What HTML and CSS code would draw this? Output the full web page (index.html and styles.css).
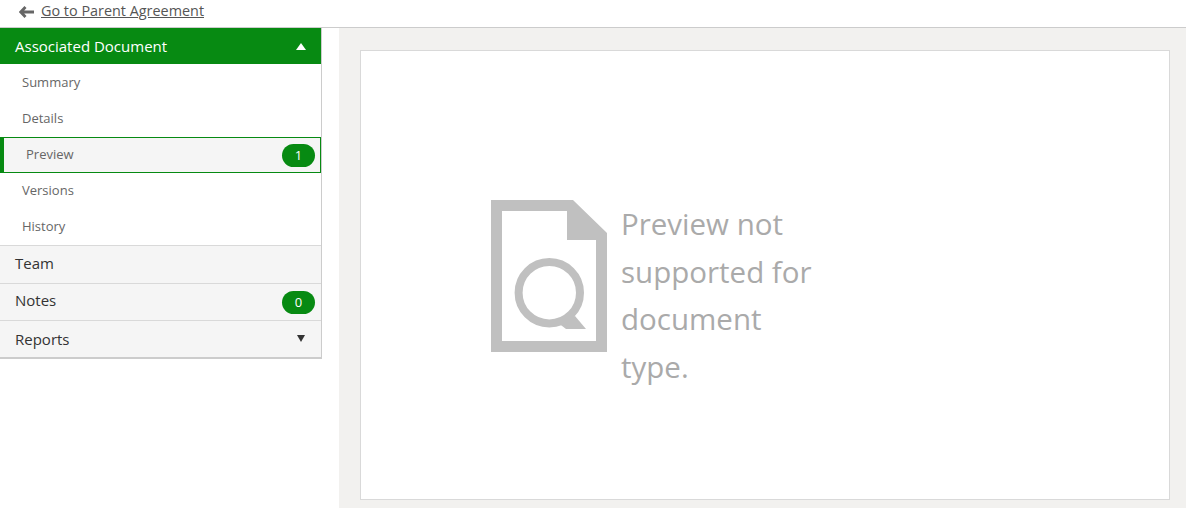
FILE: index.html
```html
<!DOCTYPE html>
<html lang="en">
<head>
    <meta charset="UTF-8">
    <title>Preview</title>
    <link rel="stylesheet" href="styles.css">
</head>
<body>
    <div class="top-bar">
        <svg class="back-icon" width="15" height="12" viewBox="0 0 15 12">
            <path d="M6.5 1 1.8 6 6.5 11M2.5 6H15" fill="none" stroke="#666" stroke-width="2.8"/>
        </svg>
        <a class="back-link" href="#">Go to Parent Agreement</a>
    </div>
    <div class="layout">
        <div class="sidebar">
            <div class="section-head active">
                <span>Associated Document</span>
                <span class="arrow up"></span>
            </div>
            <div class="sub-item">Summary</div>
            <div class="sub-item">Details</div>
            <div class="sub-item selected">
                <span class="sub-label">Preview</span>
                <span class="badge">1</span>
            </div>
            <div class="sub-item">Versions</div>
            <div class="sub-item">History</div>
            <div class="section-head team">
                <span class="head-label">Team</span>
            </div>
            <div class="section-head notes">
                <span class="head-label">Notes</span>
                <span class="badge">0</span>
            </div>
            <div class="section-head reports">
                <span>Reports</span>
                <span class="arrow down"></span>
            </div>
        </div>
        <div class="main">
            <div class="card">
                <div class="no-preview">
                    <svg class="doc-icon" width="116" height="152" viewBox="0 0 116 152">
                        <path fill-rule="evenodd" fill="#c0c0c0" d="M0 0H82L116 33V152H0ZM11 11V141H105V40H76V11Z"/>
                        <circle cx="58.3" cy="92.7" r="30.7" fill="none" stroke="#c0c0c0" stroke-width="8"/>
                        <path fill="#c0c0c0" d="M84 116 95 129H75L66 122Z"/>
                    </svg>
                    <p class="no-preview-text">Preview not supported for document type.</p>
                </div>
            </div>
        </div>
    </div>
</body>
</html>
```

FILE: styles.css
```css
html, body {
    height: 100%;
}
body {
    margin: 0;
    font-family: "Open Sans", sans-serif;
    color: #333;
    background-color: #fff;
    display: flex;
    flex-direction: column;
    overflow: hidden;
}
.top-bar {
    height: 27px;
    flex: none;
    display: flex;
    align-items: center;
    padding-left: 19px;
    padding-bottom: 7px;
    box-sizing: border-box;
}
.back-icon {
    margin-top: 3px;
    margin-right: 7px;
}
.back-link {
    font-size: 14.4px;
    color: #555;
}
.layout {
    flex: 1;
    display: flex;
    border-top: 1px solid #ccc;
}
.sidebar {
    width: 322px;
    flex: none;
    align-self: flex-start;
    box-sizing: border-box;
    border-right: 1px solid #ccc;
    border-bottom: 2px solid #ccc;
}
.section-head {
    display: flex;
    justify-content: space-between;
    align-items: center;
    padding: 0 6px 0 15px;
    font-size: 15px;
    background-color: #f5f5f5;
    border-top: 1px solid #d9d9d9;
    box-sizing: border-box;
}
.section-head.active {
    height: 36px;
    color: #fff;
    background-color: #078a12;
    border-top: none;
}
.section-head.team {
    height: 38px;
}
.section-head.notes {
    height: 37px;
}
.section-head.reports {
    height: 37px;
    padding-bottom: 1px;
}
.head-label {
    padding-bottom: 3px;
}
.notes .head-label {
    padding-bottom: 5px;
}
.sub-item {
    height: 36px;
    display: flex;
    justify-content: space-between;
    align-items: center;
    padding: 0 6px 0 22px;
    font-size: 13px;
    color: #666;
    box-sizing: border-box;
}
.sub-item.selected {
    margin-top: 1px;
    padding-right: 5px;
    background-color: #f5f5f5;
    border: 1px solid #078a12;
    border-left-width: 4px;
}
.sub-label {
    padding-bottom: 2px;
}
.selected ~ .sub-item {
    padding-bottom: 2px;
}
.badge {
    width: 33px;
    height: 23px;
    border-radius: 12px;
    background-color: #078a12;
    color: #fff;
    font-size: 13px;
    display: flex;
    align-items: center;
    justify-content: center;
}
.arrow {
    width: 0;
    height: 0;
    border-left: 5px solid transparent;
    border-right: 5px solid transparent;
}
.arrow.up {
    margin-right: 9px;
    border-bottom: 7px solid #fff;
}
.arrow.down {
    margin-right: 10px;
    border-left-width: 4.5px;
    border-right-width: 4.5px;
    border-top: 7px solid #333;
}
.main {
    flex: 1;
    margin-left: 17px;
    padding: 22px 16px 8px 21px;
    background-color: #f2f1ef;
    display: flex;
}
.card {
    flex: 1;
    background-color: #fff;
    border: 1px solid #d9d9d9;
    padding: 149px 0 0 130px;
}
.no-preview {
    display: flex;
    align-items: flex-start;
}
.doc-icon {
    flex: none;
}
.no-preview-text {
    width: 205px;
    margin: 0.4px 0 0 14px;
    font-size: 29.5px;
    line-height: 47.4px;
    color: #aaa;
}
```
